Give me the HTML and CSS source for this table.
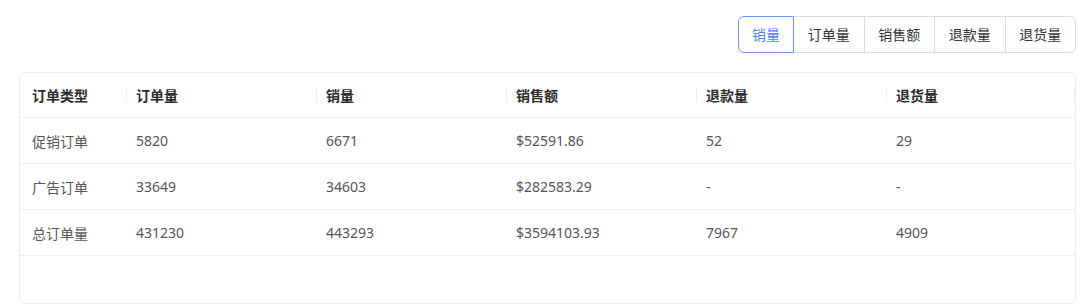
FILE: index.html
```html
<!DOCTYPE html>
<html lang="zh-CN">
<head>
<meta charset="utf-8">
<title>订单统计</title>
<link rel="stylesheet" href="styles.css">
</head>
<body>
<div class="page">
  <div class="toolbar">
    <div class="seg">
      <button class="seg-btn active">销量</button>
      <button class="seg-btn">订单量</button>
      <button class="seg-btn">销售额</button>
      <button class="seg-btn">退款量</button>
      <button class="seg-btn">退货量</button>
    </div>
  </div>
  <div class="card">
    <table class="tbl">
      <colgroup>
        <col class="c1"><col class="cn"><col class="cn"><col class="cn"><col class="cn"><col class="cl">
      </colgroup>
      <thead>
        <tr><th>订单类型</th><th>订单量</th><th>销量</th><th>销售额</th><th>退款量</th><th class="last">退货量</th></tr>
      </thead>
      <tbody>
        <tr><td>促销订单</td><td>5820</td><td>6671</td><td>$52591.86</td><td>52</td><td>29</td></tr>
        <tr><td>广告订单</td><td>33649</td><td>34603</td><td>$282583.29</td><td>-</td><td>-</td></tr>
        <tr><td>总订单量</td><td>431230</td><td>443293</td><td>$3594103.93</td><td>7967</td><td>4909</td></tr>
      </tbody>
    </table>
  </div>
</div>
</body>
</html>
```
FILE: styles.css
```css
html, body {
  margin: 0;
  padding: 0;
  background: #ffffff;
}
.page {
  font-family: "Noto Sans", "Noto Sans CJK SC", sans-serif;
  font-size: 14px;
  color: #555555;
  padding: 16px 4px 0 19px;
}
.toolbar {
  display: flex;
  justify-content: flex-end;
}
.seg {
  display: flex;
}
.seg-btn {
  font-family: inherit;
  font-size: 14px;
  height: 37px;
  padding: 0 13.75px;
  margin: 0;
  margin-left: -1px;
  background: #ffffff;
  color: #333333;
  border: 1px solid #dcdcdc;
  border-radius: 0;
  line-height: 35px;
  position: relative;
}
.seg-btn:first-child {
  margin-left: 0;
  padding: 0 13px;
  border-radius: 6px 0 0 6px;
}
.seg-btn:last-child {
  border-radius: 0 6px 6px 0;
}
.seg-btn.active {
  color: #4b7ff6;
  border-color: #6d98f8;
  z-index: 1;
}
.card {
  margin-top: 19px;
  height: 230px;
  border: 1px solid #eeeeee;
  border-radius: 6px;
  overflow: hidden;
}
.tbl {
  width: 1056px;
  border-collapse: collapse;
  table-layout: fixed;
}
.c1 { width: 106px; }
.cn { width: 190px; }
.cl { width: 190px; }
.tbl th {
  position: relative;
  height: 44px;
  padding: 0 0 0 10px;
  text-align: left;
  font-weight: 700;
  color: #2a2a2a;
  border-bottom: 1px solid #efefef;
}
.tbl td {
  height: 45px;
  padding: 0 0 0 10px;
  border-bottom: 1px solid #efefef;
  color: #555555;
}
.tbl th:first-child,
.tbl td:first-child {
  padding-left: 12px;
}
.tbl th + th::before {
  content: "";
  position: absolute;
  left: 0;
  top: 50%;
  width: 1px;
  height: 14px;
  margin-top: -7px;
  background: #ececec;
}
.tbl th.last::after {
  content: "";
  position: absolute;
  right: 1px;
  top: 50%;
  width: 1px;
  height: 14px;
  margin-top: -7px;
  background: #ececec;
}
```
